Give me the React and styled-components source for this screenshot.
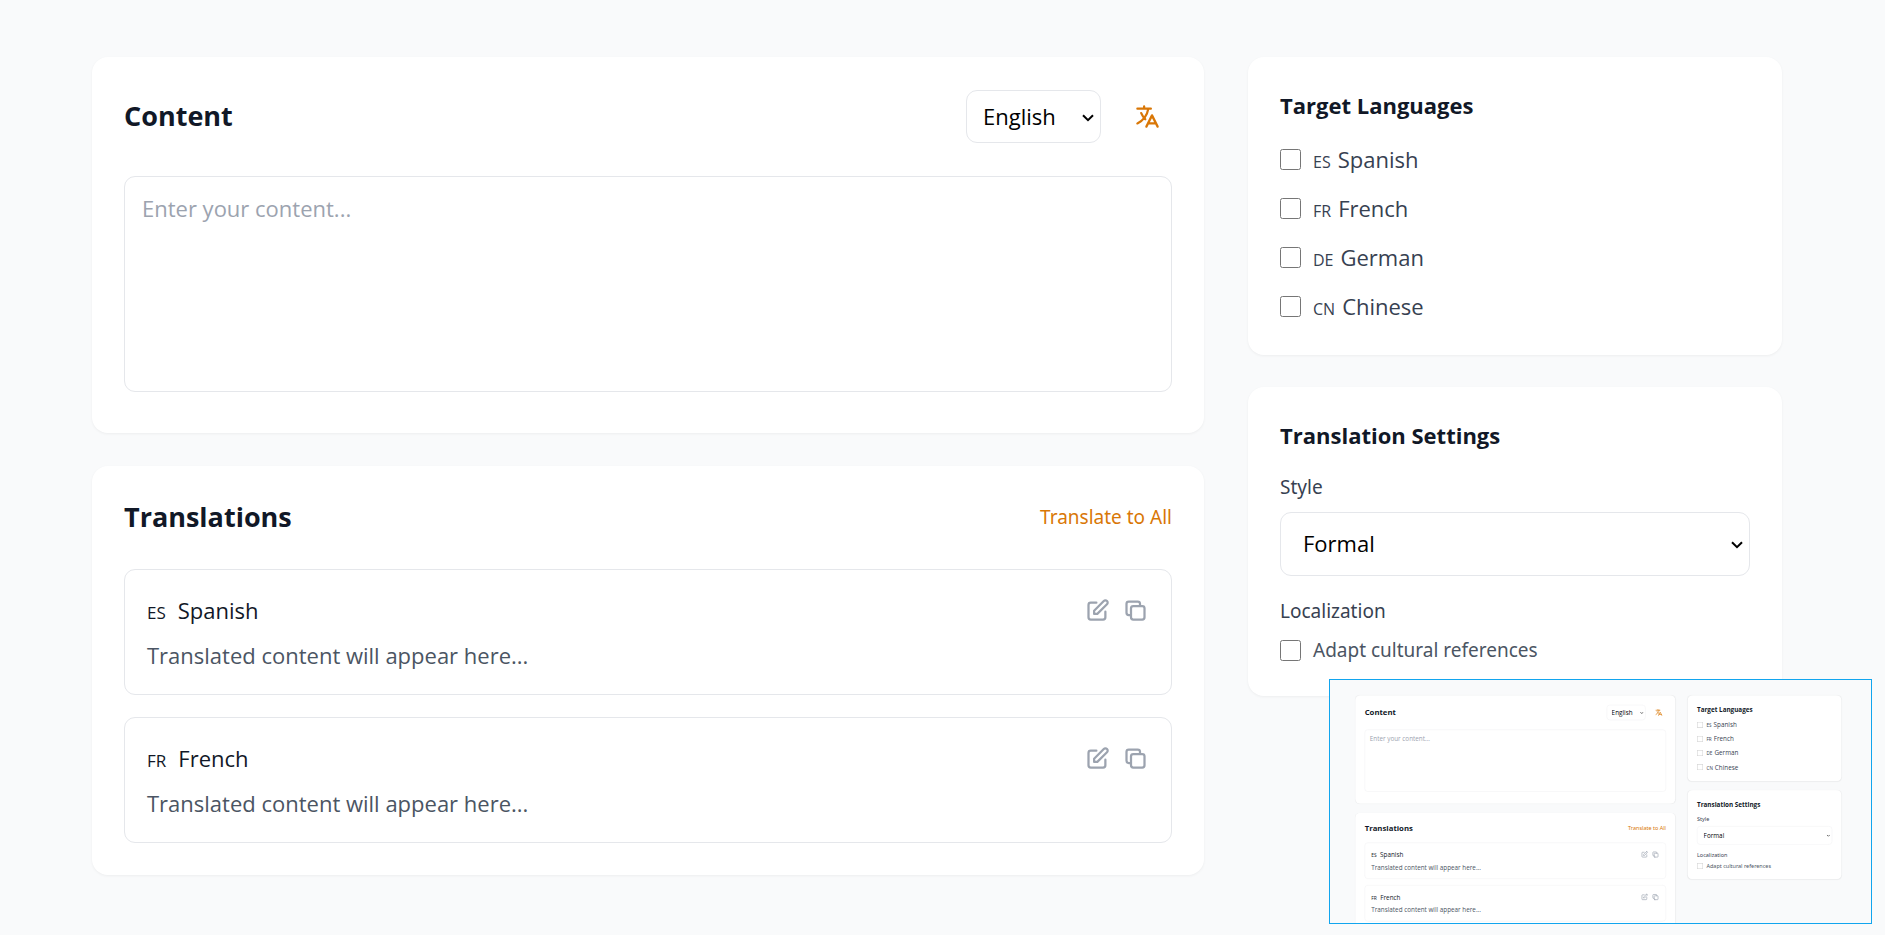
import React, { useId } from "react";
import styled, { createGlobalStyle } from "styled-components";
import { HiOutlineDuplicate, HiOutlinePencilAlt, HiOutlineTranslate } from "react-icons/hi";

const GlobalStyle = createGlobalStyle`
  * { box-sizing: border-box; }
  body {
    margin: 0;
    background: #f9fafb;
    font-family: "Open Sans", "Noto Sans", sans-serif;
    color: #000;
    overflow: hidden;
  }
  h2, h3, p { margin: 0; }
  button, input, select, textarea { font: inherit; }
`;

const PageArea = styled.div`
  min-height: 100vh;
  padding: 57px 103px 57px 92px;
  background: #f9fafb;
`;

const Columns = styled.div`
  display: grid;
  grid-template-columns: repeat(3, minmax(0, 1fr));
  gap: 44px;
  align-items: start;
`;

const Column = styled.div`
  grid-column: span ${(p) => p.$span};
  display: flex;
  flex-direction: column;
  gap: ${(p) => (p.$span === 2 ? 33 : 32)}px;
`;

const Card = styled.section`
  padding: 32px;
  background: #fff;
  border-radius: 16px;
  box-shadow: 0 1px 3px rgba(0, 0, 0, 0.05);
`;

const CardHeader = styled.div`
  display: flex;
  align-items: center;
  justify-content: space-between;
  margin-bottom: 33px;
`;

const Title = styled.h2`
  font-size: 27px;
  line-height: 38px;
  font-weight: 700;
  color: #111827;
`;

const SideTitle = styled.h3`
  font-size: 22px;
  line-height: 33px;
  font-weight: 700;
  color: #111827;
  margin-bottom: 21px;
`;

const Controls = styled.div`
  display: flex;
  align-items: center;
  gap: 22px;
  padding-top: 1px;
`;

const SelectWrap = styled.div`
  position: relative;
  width: ${(p) => (p.$wide ? "100%" : "135px")};
`;

const SelectBox = styled.select`
  display: block;
  appearance: none;
  width: 100%;
  height: ${(p) => (p.$wide ? 64 : 53)}px;
  padding: 0 32px 2px ${(p) => (p.$wide ? 22 : 16)}px;
  border: 1px solid #e5e7eb;
  border-radius: 11px;
  background: #fff;
  color: #000;
  font-size: 22px;
`;

const Chevron = styled.svg`
  position: absolute;
  right: 7px;
  top: 50%;
  width: 12px;
  height: 8px;
  margin-top: -3px;
  pointer-events: none;
  fill: none;
  stroke: #000;
  stroke-width: 2;
`;

const IconButton = styled.button`
  display: flex;
  padding: ${(p) => p.$pad || 0}px;
  border: 0;
  background: none;
  color: ${(p) => p.$color};
  cursor: pointer;
`;

const ContentInput = styled.textarea`
  display: block;
  width: 100%;
  height: 216px;
  margin-bottom: 9px;
  padding: 15px 17px;
  border: 1px solid #e5e7eb;
  border-radius: 11px;
  resize: none;
  font-size: 22px;
  line-height: 33px;
  &::placeholder { color: #9ca3af; opacity: 1; }
`;

const TextButton = styled.button`
  padding: 0;
  border: 0;
  background: none;
  color: #d97706;
  font-family: "Noto Sans", sans-serif;
  font-size: 19px;
  line-height: 28px;
  cursor: pointer;
`;

const TranslationList = styled.div`
  display: flex;
  flex-direction: column;
  gap: 22px;
`;

const Translation = styled.article`
  padding: 22px;
  border: 1px solid #e5e7eb;
  border-radius: 11px;
`;

const TranslationHeader = styled.div`
  display: flex;
  align-items: center;
  justify-content: space-between;
  height: 36px;
  margin-bottom: 10px;
`;

const LanguageName = styled.span`
  display: flex;
  align-items: baseline;
  gap: ${(p) => p.$gap}px;
  font-size: 22px;
  line-height: 33px;
  color: ${(p) => p.$color};
`;

const Code = styled.span`
  font-size: ${(p) => p.$size}px;
  line-height: 20px;
`;

const Actions = styled.div`
  display: flex;
  gap: 11px;
`;

const TranslatedText = styled.p`
  font-size: 22px;
  line-height: 34px;
  color: #4b5563;
`;

const Options = styled.div`
  display: flex;
  flex-direction: column;
  gap: 16px;
`;

const Option = styled.label`
  display: flex;
  align-items: center;
  gap: 12px;
  font-family: "Noto Sans", sans-serif;
  font-size: 19px;
  line-height: 28px;
  color: #4b5563;
`;

const OptionName = styled(LanguageName)`
  font-family: "Open Sans", sans-serif;
`;

const Checkbox = styled.input`
  width: 21px;
  height: 21px;
  margin: 0;
`;

const FieldLabel = styled.label`
  display: block;
  margin-bottom: 11px;
  font-family: "Noto Sans", sans-serif;
  font-size: 19px;
  line-height: 28px;
  color: #374151;
`;

const Field = styled.div`
  margin-bottom: 21px;
`;

const PreviewFrame = styled.aside`
  position: fixed;
  right: 13px;
  bottom: 11px;
  width: 543px;
  height: 245px;
  overflow: hidden;
  border: 1px solid #12a5ee;
  background: #f9fafb;
`;

const PreviewPage = styled.div`
  width: 100vw;
  margin: -1px;
  transform: scale(0.2875);
  transform-origin: 0 0;
`;

const translations = [
  { code: "ES", name: "Spanish" },
  { code: "FR", name: "French" },
];

const targets = [
  ...translations,
  { code: "DE", name: "German" },
  { code: "CN", name: "Chinese" },
];

function Select({ wide, options, ...rest }) {
  return (
    <SelectWrap $wide={wide}>
      <SelectBox $wide={wide} defaultValue={options[0]} {...rest}>
        {options.map((o) => (
          <option key={o}>{o}</option>
        ))}
      </SelectBox>
      <Chevron viewBox="0 0 12 8" aria-hidden="true">
        <path d="M1 1.2l5 5 5-5" />
      </Chevron>
    </SelectWrap>
  );
}

function ContentCard() {
  return (
    <Card>
      <CardHeader>
        <Title>Content</Title>
        <Controls>
          <Select aria-label="Source language" options={["English", "Spanish", "French"]} />
          <IconButton type="button" aria-label="Translate" $color="#d97706" $pad={11}>
            <HiOutlineTranslate size={27} />
          </IconButton>
        </Controls>
      </CardHeader>
      <ContentInput aria-label="Content" placeholder="Enter your content..." />
    </Card>
  );
}

function TranslationsCard() {
  return (
    <Card>
      <CardHeader>
        <Title>Translations</Title>
        <TextButton type="button">Translate to All</TextButton>
      </CardHeader>
      <TranslationList>
        {translations.map((t) => (
          <Translation key={t.code}>
            <TranslationHeader>
              <LanguageName $gap={12} $color="#111827">
                <Code $size={17}>{t.code}</Code>
                <span>{t.name}</span>
              </LanguageName>
              <Actions>
                <IconButton type="button" aria-label={`Edit ${t.name}`} $color="#9ca3af">
                  <HiOutlinePencilAlt size={27} />
                </IconButton>
                <IconButton type="button" aria-label={`Copy ${t.name}`} $color="#9ca3af">
                  <HiOutlineDuplicate size={27} />
                </IconButton>
              </Actions>
            </TranslationHeader>
            <TranslatedText>Translated content will appear here...</TranslatedText>
          </Translation>
        ))}
      </TranslationList>
    </Card>
  );
}

function TargetsCard() {
  return (
    <Card>
      <SideTitle>Target Languages</SideTitle>
      <Options>
        {targets.map((t) => (
          <Option key={t.code}>
            <Checkbox type="checkbox" />
            <OptionName $gap={7} $color="#374151">
              <Code $size={16}>{t.code}</Code>
              <span>{t.name}</span>
            </OptionName>
          </Option>
        ))}
      </Options>
    </Card>
  );
}

function SettingsCard() {
  const id = useId();
  return (
    <Card>
      <SideTitle>Translation Settings</SideTitle>
      <Field>
        <FieldLabel htmlFor={`${id}-style`}>Style</FieldLabel>
        <Select id={`${id}-style`} wide options={["Formal", "Casual"]} />
      </Field>
      <FieldLabel htmlFor={`${id}-adapt`}>Localization</FieldLabel>
      <Option>
        <Checkbox id={`${id}-adapt`} type="checkbox" />
        Adapt cultural references
      </Option>
    </Card>
  );
}

function Page() {
  return (
    <PageArea>
      <Columns>
        <Column $span={2}>
          <ContentCard />
          <TranslationsCard />
        </Column>
        <Column $span={1}>
          <TargetsCard />
          <SettingsCard />
        </Column>
      </Columns>
    </PageArea>
  );
}

export default function App() {
  return (
    <>
      <GlobalStyle />
      <Page />
      <PreviewFrame aria-label="Page preview" inert>
        <PreviewPage>
          <Page />
        </PreviewPage>
      </PreviewFrame>
    </>
  );
}
